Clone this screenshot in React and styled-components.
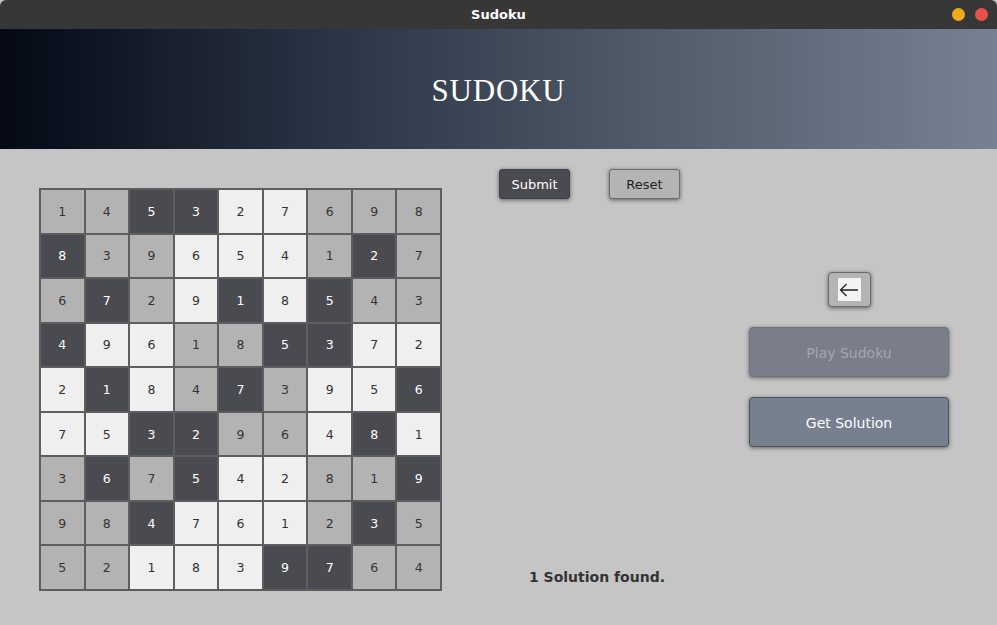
import React from 'react';
import styled, { createGlobalStyle } from 'styled-components';

const GlobalStyle = createGlobalStyle`
  html, body {
    margin: 0;
    padding: 0;
    background: #c5c5c5;
  }
  body {
    font-family: "DejaVu Sans", "Noto Sans", sans-serif;
  }
`;

const Window = styled.div`
  width: 997px;
  height: 625px;
  display: flex;
  flex-direction: column;
  background: #c5c5c5;
  overflow: hidden;
`;

const TitleBar = styled.div`
  height: 29px;
  flex-shrink: 0;
  background: #373737;
  border-radius: 6px 6px 0 0;
  display: flex;
  align-items: center;
  justify-content: center;
  position: relative;
  color: #ffffff;
  font-weight: bold;
  font-size: 13px;
`;

const Dots = styled.div`
  position: absolute;
  right: 9px;
  top: 8px;
  display: flex;
  gap: 10px;
`;

const Dot = styled.span`
  width: 13px;
  height: 13px;
  border-radius: 50%;
  background: ${(p) => p.color};
`;

const Header = styled.header`
  height: 120px;
  box-sizing: border-box;
  padding-top: 4px;
  flex-shrink: 0;
  background: linear-gradient(90deg, #040915 0%, #2a3444 33%, #525c6b 66%, #768292 100%);
  display: flex;
  align-items: center;
  justify-content: center;
  color: #ffffff;
  font-family: "Liberation Serif", "Times New Roman", serif;
  font-size: 31px;
  letter-spacing: 0.8px;
`;

const Main = styled.main`
  flex: 1;
  display: flex;
  padding: 20px 0 0 39px;
`;

const Board = styled.div`
  margin-top: 19px;
  width: 401px;
  height: 401px;
  border: 1px solid #5c5c5c;
  display: grid;
  grid-template-columns: repeat(9, 1fr);
  grid-template-rows: repeat(9, 1fr);
`;

const shades = {
  d: { bg: '#4a4b50', fg: '#ffffff' },
  g: { bg: '#b3b3b3', fg: '#333333' },
  w: { bg: '#efefef', fg: '#333333' },
};

const Cell = styled.div`
  border: 1px solid #5e5e5e;
  background: ${(p) => shades[p.shade].bg};
  color: ${(p) => shades[p.shade].fg};
  display: flex;
  align-items: center;
  justify-content: center;
  font-size: 12.5px;
`;

const Middle = styled.section`
  width: 250px;
  padding-left: 57px;
  height: 421px;
  display: flex;
  flex-direction: column;
  justify-content: space-between;
`;

const ButtonRow = styled.div`
  display: flex;
  gap: 39px;
`;

const SmallButton = styled.button`
  width: 71px;
  height: 30px;
  border-radius: 3px;
  border: 1px solid ${(p) => (p.dark ? '#3f4045' : '#6c6c6c')};
  background: ${(p) => (p.dark ? '#4a4b50' : '#b4b4b4')};
  color: ${(p) => (p.dark ? '#ffffff' : '#222222')};
  font-family: "DejaVu Sans", sans-serif;
  font-size: 13px;
  box-shadow: 0 1px 4px rgba(0, 0, 0, 0.55);
  padding: 0;
`;

const Status = styled.p`
  margin: 0 0 5px 30px;
  font-weight: bold;
  font-size: 14px;
  color: #333333;
`;

const Side = styled.section`
  width: 200px;
  display: flex;
  flex-direction: column;
  align-items: center;
  padding-top: 103px;
`;

const BackButton = styled.button`
  width: 43px;
  height: 35px;
  border-radius: 4px;
  border: 1px solid #6a6a6a;
  background: #b4b4b4;
  box-shadow: 0 1px 4px rgba(0, 0, 0, 0.55);
  display: flex;
  align-items: center;
  justify-content: center;
  padding: 0;
`;

const ArrowBox = styled.span`
  width: 23px;
  height: 23px;
  background: #f4f4f4;
  display: flex;
  align-items: center;
  justify-content: center;
`;

const BigButton = styled.button`
  width: 200px;
  height: 50px;
  border-radius: 4px;
  margin-top: ${(p) => p.gap}px;
  border: 1px solid ${(p) => (p.disabled ? '#6f737c' : '#4c535e')};
  background: ${(p) => (p.disabled ? '#7a7e88' : '#76808f')};
  color: ${(p) => (p.disabled ? '#a3a7b0' : '#ffffff')};
  font-family: "DejaVu Sans", sans-serif;
  font-size: 14px;
  padding-top: 2px;
  box-shadow: 0 1px 4px rgba(0, 0, 0, 0.5);
`;

const board = [
  ['1g', '4g', '5d', '3d', '2w', '7w', '6g', '9g', '8g'],
  ['8d', '3g', '9g', '6w', '5w', '4w', '1g', '2d', '7g'],
  ['6g', '7d', '2g', '9w', '1d', '8w', '5d', '4g', '3g'],
  ['4d', '9w', '6w', '1g', '8g', '5d', '3d', '7w', '2w'],
  ['2w', '1d', '8w', '4g', '7d', '3g', '9w', '5w', '6d'],
  ['7w', '5w', '3d', '2d', '9g', '6g', '4w', '8d', '1w'],
  ['3g', '6d', '7g', '5d', '4w', '2w', '8g', '1g', '9d'],
  ['9g', '8g', '4d', '7w', '6w', '1w', '2g', '3d', '5g'],
  ['5g', '2g', '1w', '8w', '3w', '9d', '7d', '6g', '4g'],
];

function App() {
  return (
    <Window>
      <GlobalStyle />
      <TitleBar>
        Sudoku
        <Dots>
          <Dot color="#f0aa1e" />
          <Dot color="#e8524a" />
        </Dots>
      </TitleBar>
      <Header>SUDOKU</Header>
      <Main>
        <Board>
          {board.flat().map((c, i) => (
            <Cell key={i} shade={c[1]}>
              {c[0]}
            </Cell>
          ))}
        </Board>
        <Middle>
          <ButtonRow>
            <SmallButton dark>Submit</SmallButton>
            <SmallButton>Reset</SmallButton>
          </ButtonRow>
          <Status>1 Solution found.</Status>
        </Middle>
        <Side>
          <BackButton>
            <ArrowBox>
              <svg width="20" height="14" viewBox="0 0 20 14" fill="none" stroke="#222" strokeWidth="1.3">
                <path d="M19 7H1.5M7.5 1 1.5 7l6 6" />
              </svg>
            </ArrowBox>
          </BackButton>
          <BigButton disabled gap={20}>Play Sudoku</BigButton>
          <BigButton gap={20}>Get Solution</BigButton>
        </Side>
      </Main>
    </Window>
  );
}

export default App;
